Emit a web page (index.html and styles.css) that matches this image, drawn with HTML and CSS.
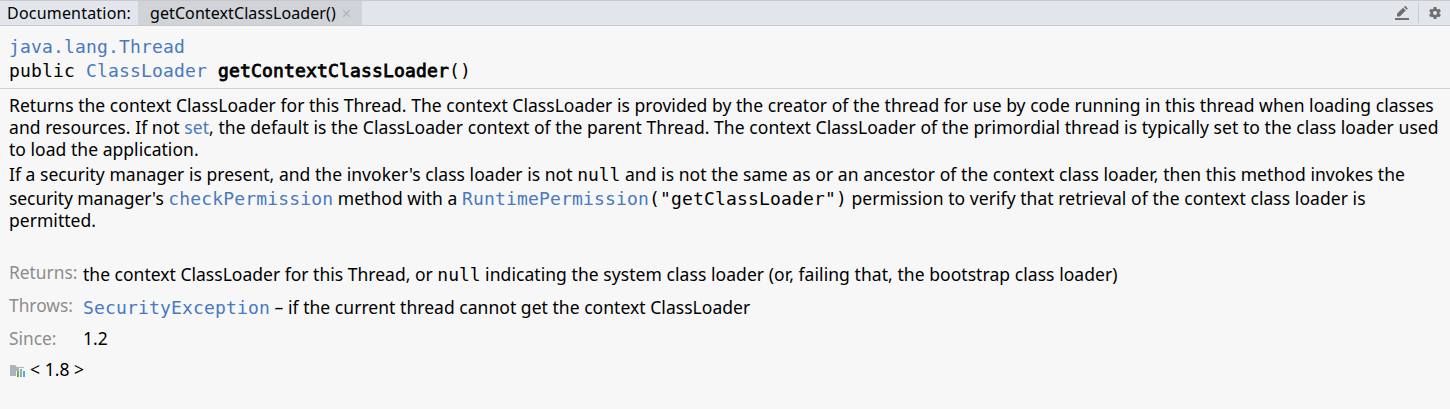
FILE: index.html
```html
<!DOCTYPE html>
<html lang="en"><head><meta charset="utf-8"><title>Documentation</title><link rel="stylesheet" href="styles.css"></head>
<body>
<header class="bar"><span class="title">Documentation:</span><div class="tab"><span class="tab-name">getContextClassLoader()</span><svg class="close" width="9" height="9" viewBox="0 0 9 9"><path d="M1 1l7 7M8 1L1 8" stroke="#b0b4b8" stroke-width="1.1"/></svg></div>
<div class="tools"><svg width="16" height="16" viewBox="0 0 16 16"><path d="M3 8.800L9 2.800l2.800 2.800L5.800 11.600H3zM9.900 1.900L11.100.7l2.800 2.800-1.200 1.200zM1 13h14v2H1z" fill="#6e6e6e"/></svg><i class="sep"></i><svg width="16" height="16" viewBox="0 0 16 16"><g fill="#6e6e6e"><rect x="6.500" y="2" width="3" height="12"/><rect x="6.500" y="2" width="3" height="12" transform="rotate(60 8 8)"/><rect x="6.500" y="2" width="3" height="12" transform="rotate(120 8 8)"/><circle cx="8" cy="8" r="4.600"/></g><circle cx="8" cy="8" r="2" fill="#e2e6ec"/></svg></div></header>
<section class="sig"><div><a class="m">java.lang.Thread</a></div><div class="m">public <a>ClassLoader</a> <span class="name">getContextClassLoader</span>()</div></section>
<main class="doc">
<p><span class="t">Returns the context ClassLoader for this Thread. The context ClassLoader is provided by the creator of the thread for use by code running in this thread when loading classes</span><span class="t wide">and resources. If not <a>set</a>, the default is the ClassLoader context of the parent Thread. The context ClassLoader of the primordial thread is typically set to the class loader used</span><span class="t">to load the application.</span></p>
<p class="second"><span class="t">If a security manager is present, and the invoker's class loader is not <code class="null">null</code><span class="wide"> and is not the same as or an ancestor of the context class loader, then this method invokes the</span></span><span class="t tall"><span class="tight">security manager's </span><a class="m">checkPermission</a> method with a <a class="m">RuntimePermission</a><code>("getClassLoader")</code> <span class="wide">permission to verify that retrieval of the context class loader is</span></span><span class="t">permitted.</span></p>
<dl><dt>Returns:</dt><dd class="low"><span class="tighter">the context ClassLoader for this Thread, or </span><code class="null">null</code><span class="wide"> indicating the system class loader (or, failing that, the bootstrap class loader)</span></dd><dt>Throws:</dt><dd class="low"><a class="m">SecurityException</a> – if the current thread cannot get the context ClassLoader</dd><dt>Since:</dt><dd>1.2</dd></dl>
<div class="lib"><svg width="16" height="16" viewBox="0 0 16 16"><path d="M1 3h5l2 2h7v1H10v3H7v5H1z" fill="#aab5bc"/><path d="M8 9h2v6H8z" fill="#62b543"/><path d="M11 7h2v8h-2z" fill="#9aa7b0"/><path d="M14 9h2v6h-2z" fill="#40b6e0"/></svg><span>&lt; 1.8 &gt;</span></div>
</main></body></html>
```
FILE: styles.css
```css
*{box-sizing:border-box}
body{margin:0;width:1450px;height:409px;overflow:hidden;background:#f7f7f7;color:#000;font:17.5px/22px "Noto Sans",sans-serif;letter-spacing:.036px}
.bar{height:26px;display:flex;background:#e2e6ec;border-top:1px solid #c9c9c9;border-bottom:1px solid #c9c9c9;font-size:16px;line-height:24px}
.title{width:138px;padding-left:7px;letter-spacing:.2px}
.tab{width:224px;background:#d0d4d8;padding-left:12px;display:flex;align-items:center;letter-spacing:.09px}
.close{margin:1px 0 0 6px}
.tools{margin-left:auto;display:flex;align-items:center;padding-right:7px}
.sep{width:1px;height:20px;background:#c8ccd1;margin:0 8px}
.sig{height:63px;border-bottom:1px solid #d1d1d1;padding:8px 9px 0}
.sig>div{height:24px;line-height:24px}
.sig>.m{line-height:26px}
.m,code{font-family:"DejaVu Sans Mono",monospace;font-size:18px;letter-spacing:.164px;line-height:20px}
.null{letter-spacing:-.05px}
.name{-webkit-text-stroke:.8px #000}
a{color:#4a78c2}
.doc{padding:5px 9px}
p{margin:0;white-space:nowrap}
.second{margin-top:3px}
.t{display:block;width:max-content;height:22px;line-height:22px}
.tall{height:24px;line-height:26px}
.wide{letter-spacing:.06px}
.tight{letter-spacing:-.08px}
.tighter{letter-spacing:.01px}
dl{margin:30px 0 0;display:grid;grid-template-columns:74px 1fr;grid-template-rows:22px 22px 22px;row-gap:11px;white-space:nowrap}
dt{color:#8c8c8c;font-size:17.33px;letter-spacing:0}
dd{margin:0}
.low{padding-top:2px}
.lib{display:flex;align-items:center;gap:5px;margin-top:9px}
.lib svg{margin-top:2px}
```
